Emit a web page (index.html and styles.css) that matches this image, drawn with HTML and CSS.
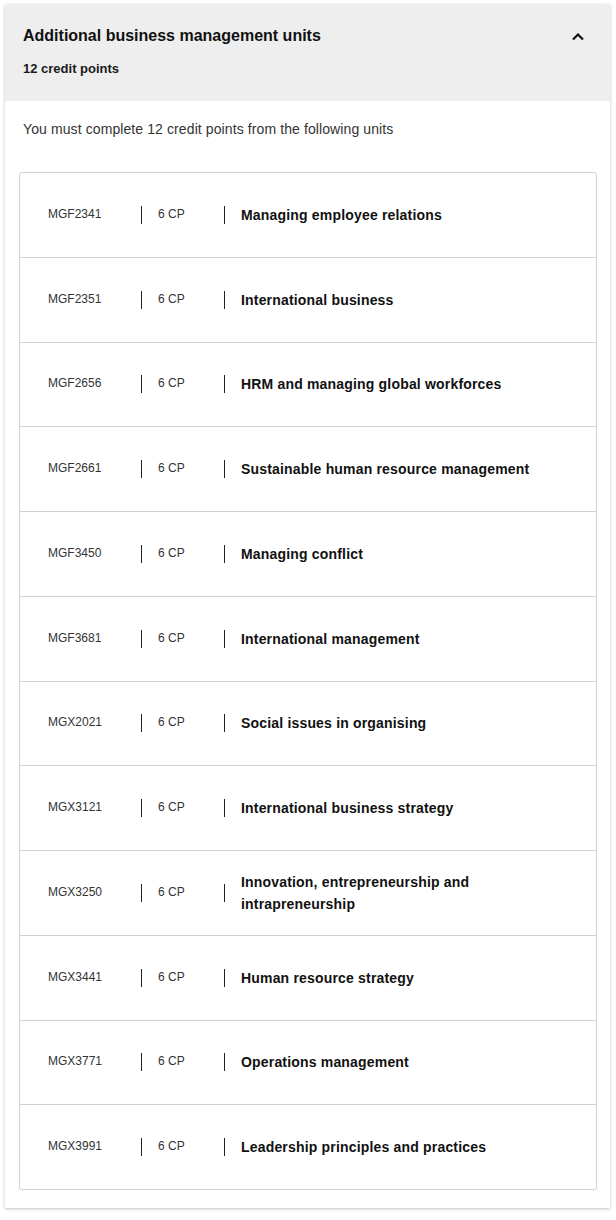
FILE: index.html
```html
<!DOCTYPE html>
<html>
  <head>
    <title>Additional business management units</title>
    <link rel="stylesheet" href="styles.css">
  </head>
  <body>
    <div class="accordion">
      <div class="accordion-header">
        <div class="header-top">
          <h2 class="header-title">Additional business management units</h2>
          <svg class="chevron" width="14" height="9" viewBox="0 0 14 9">
            <polyline points="2,7.5 7,2.5 12,7.5" fill="none" stroke="#111" stroke-width="2.2" />
          </svg>
        </div>
        <div class="header-sub">12 credit points</div>
      </div>
      <div class="accordion-body">
        <p class="intro">You must complete 12 credit points from the following units</p>
        <div class="unit-list">
          <div class="unit"><span class="code">MGF2341</span><span class="bar"></span><span class="cp">6 CP</span><span class="bar"></span><span class="name">Managing employee relations</span></div>
          <div class="unit"><span class="code">MGF2351</span><span class="bar"></span><span class="cp">6 CP</span><span class="bar"></span><span class="name">International business</span></div>
          <div class="unit"><span class="code">MGF2656</span><span class="bar"></span><span class="cp">6 CP</span><span class="bar"></span><span class="name">HRM and managing global workforces</span></div>
          <div class="unit"><span class="code">MGF2661</span><span class="bar"></span><span class="cp">6 CP</span><span class="bar"></span><span class="name">Sustainable human resource management</span></div>
          <div class="unit"><span class="code">MGF3450</span><span class="bar"></span><span class="cp">6 CP</span><span class="bar"></span><span class="name">Managing conflict</span></div>
          <div class="unit"><span class="code">MGF3681</span><span class="bar"></span><span class="cp">6 CP</span><span class="bar"></span><span class="name">International management</span></div>
          <div class="unit"><span class="code">MGX2021</span><span class="bar"></span><span class="cp">6 CP</span><span class="bar"></span><span class="name">Social issues in organising</span></div>
          <div class="unit"><span class="code">MGX3121</span><span class="bar"></span><span class="cp">6 CP</span><span class="bar"></span><span class="name">International business strategy</span></div>
          <div class="unit"><span class="code">MGX3250</span><span class="bar"></span><span class="cp">6 CP</span><span class="bar"></span><span class="name">Innovation, entrepreneurship and intrapreneurship</span></div>
          <div class="unit"><span class="code">MGX3441</span><span class="bar"></span><span class="cp">6 CP</span><span class="bar"></span><span class="name">Human resource strategy</span></div>
          <div class="unit"><span class="code">MGX3771</span><span class="bar"></span><span class="cp">6 CP</span><span class="bar"></span><span class="name">Operations management</span></div>
          <div class="unit"><span class="code">MGX3991</span><span class="bar"></span><span class="cp">6 CP</span><span class="bar"></span><span class="name">Leadership principles and practices</span></div>
        </div>
      </div>
    </div>
  </body>
</html>
```

FILE: styles.css
```css
/* Page */
body {
  margin: 0;
  padding: 4px 6px 12px 5px;
  background-color: #ffffff;
  font-family: "Liberation Sans", Arial, sans-serif;
  color: #1a1a1a;
}

/* Accordion card */
.accordion {
  background-color: #ffffff;
  box-shadow: 0 1px 3px rgba(0, 0, 0, 0.25);
}

.accordion-header {
  background-color: #eeeeee;
  padding: 22px 18px 23px;
}

.header-top {
  display: flex;
  justify-content: space-between;
  align-items: center;
}

.header-title {
  margin: 0;
  font-size: 16px;
  line-height: 20px;
  font-weight: bold;
  color: #111111;
}

.chevron {
  margin-right: 7px;
}

.header-sub {
  margin-top: 14px;
  font-size: 13px;
  line-height: 18px;
  font-weight: bold;
  color: #1a1a1a;
}

/* Body */
.accordion-body {
  padding: 18px 13px 18px 14px;
}

.intro {
  margin: 0 0 33px 4px;
  font-size: 14px;
  line-height: 20px;
  letter-spacing: 0.1px;
  color: #333333;
}

/* Unit rows */
.unit-list {
  border: 1px solid #d2d2d2;
  border-radius: 3px;
}

.unit {
  display: flex;
  align-items: center;
  box-sizing: border-box;
  height: 84.75px;
  padding: 0 56px 0 28px;
  border-bottom: 1px solid #d2d2d2;
}

.unit:last-child {
  border-bottom: none;
  height: 83.75px;
}

.code {
  width: 93px;
  font-size: 12px;
  color: #333333;
  margin-top: -2px;
}

.cp {
  width: 66px;
  padding-left: 16px;
  font-size: 12px;
  color: #333333;
  margin-top: -2px;
}

.bar {
  width: 1px;
  height: 18px;
  background-color: #222222;
  flex-shrink: 0;
}

.name {
  flex: 1;
  padding-left: 16px;
  font-size: 14px;
  line-height: 22px;
  font-weight: bold;
  letter-spacing: 0.18px;
  color: #111111;
}
```
